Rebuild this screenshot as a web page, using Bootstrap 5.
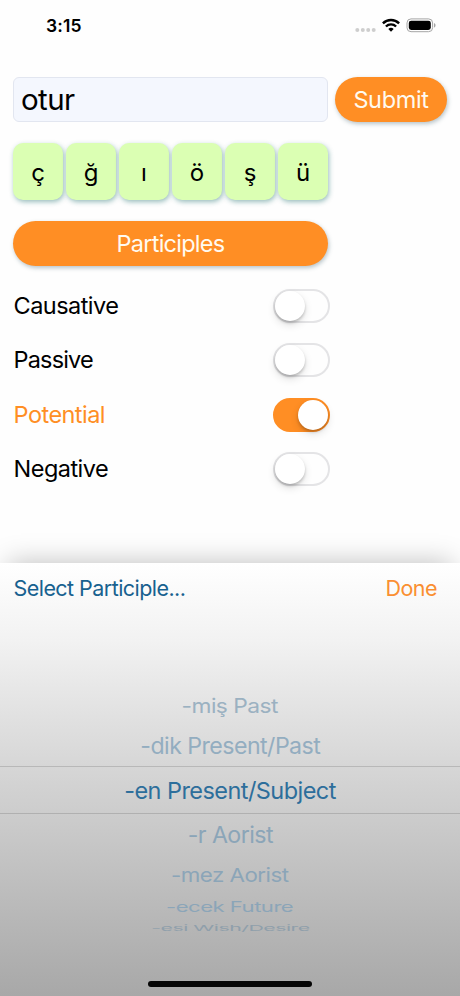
<!DOCTYPE html>
<html lang="en">
<head>
<meta charset="utf-8">
<meta name="viewport" content="width=device-width, initial-scale=1">
<title>Verb participles</title>
<link href="https://cdn.jsdelivr.net/npm/bootstrap@5.3.0/dist/css/bootstrap.min.css" rel="stylesheet">
<style>
:root{--orange:#ff8e24;--blue:#17618f}
body{font-family:Inter,"Liberation Sans",sans-serif;color:#000;background:#fefefe;font-size:23.5px;line-height:1.2;letter-spacing:-.55px;overflow:hidden}
.phone{width:460px;height:996px}
.status{height:77px;padding:15px 24px 0 46px}
.clock{font-size:17.5px;font-weight:600;letter-spacing:.1px;line-height:22px}
.content{height:485.5px;padding:0 13px}
.word{width:315px;height:45px;border:1px solid #e2e6f0;border-radius:6px;background:#f4f7fe;font-size:29.5px;letter-spacing:-.6px;padding:0 7px 2px;color:#000;line-height:1}
.pill{height:45px;border:0;border-radius:23px;background:var(--orange);color:#fffaf0;font-size:23.5px;line-height:1;letter-spacing:-.35px;padding:0;box-shadow:1px 2px 4px rgba(50,85,100,.34)}
.pill:hover{background:var(--orange);color:#fff}
.submit{width:112px}
.left-col{width:315px}
.keys{margin-top:21px;gap:3px}
.key{width:50px;height:57px;border:0;border-radius:10px;background:#dbffb3;color:#000;font-size:24px;line-height:1;padding:2px 0 0;box-shadow:1px 2px 5px rgba(30,110,110,.45)}
.participles{margin-top:21px;letter-spacing:-.75px}
.options{margin-top:12.8px}
.option{height:54.4px;width:317px}
.option>span:first-child{padding-left:.6px}
.option:nth-child(2)>span:first-child{letter-spacing:-.85px}
.option.on{color:var(--orange)}
.form-switch .toggle{width:57px;height:34px;border-radius:17px;border:2px solid #e4e4e6;background:#fefefe;position:relative;display:block}
.toggle::after{content:"";position:absolute;left:0;top:0;width:30px;height:30px;border-radius:50%;background:#fff;box-shadow:0 2px 3px rgba(0,0,0,.2),0 4px 9px rgba(0,0,0,.12)}
.on .toggle{background:var(--orange)!important;border-color:var(--orange)!important}
.on .toggle::after{left:23px}
.sheet{height:433.5px;background:linear-gradient(#fff 0,#f2f2f2 18%,#e6e6e6 30%,#cecece 56%,#b9b9b9 80%,#a8a8a8 100%);box-shadow:0 -8px 26px -8px rgba(0,0,0,.26);position:relative}
.sheet-head{height:52px;padding:0 23px 0 13.5px;font-size:21.5px;color:var(--blue)}
.sheet-head .done{color:#fa8f31}
.wheel{padding-top:80px;color:#8ba5b8}
.slot{display:flex;align-items:center;justify-content:center;white-space:nowrap}
.slot span{display:block}
.s1{height:24px;color:#9bb1c1}.s1 span{transform:translateY(.5px) scale(.97,.86)}
.s2{height:47.5px;color:#93adc0}.s2 span{transform:translateY(4.5px) scale(.985,.96)}
.s3{height:48px;border-top:1.5px solid #b8b8b8;border-bottom:1.5px solid #b0b0b0;color:#2d6e9b}
.s3 span{transform:translateY(1px)}
.s4{height:43px}.s4 span{transform:translateY(.5px) scale(.985,.95)}
.s5{height:37px}.s5 span{transform:scale(.95,.82)}
.s6{height:25px}.s6 span{transform:translateY(1px) scale(.94,.6)}
.s7{height:18px;color:#8f9fab}.s7 span{transform:scale(.905,.34)}
.home{width:164px;height:6px;border-radius:3px;background:#050505;position:absolute;left:148px;bottom:9px}
</style>
<script src="https://cdn.jsdelivr.net/npm/bootstrap@5.3.0/dist/js/bootstrap.bundle.min.js"></script>
</head>
<body>
<div class="phone d-flex flex-column">
  <header class="status d-flex justify-content-between align-items-start">
    <span class="clock">3:15</span>
    <svg width="82" height="22" viewBox="354 15 82 22">
      <g fill="#cecece"><circle cx="357.3" cy="30" r="2"/><circle cx="362.8" cy="30" r="2"/><circle cx="368.2" cy="30" r="2"/><circle cx="373.7" cy="30" r="2"/></g>
      <path d="M391 31.8l-2.7-2.7a3.9 3.9 0 0 1 5.4 0z"/>
      <g fill="none" stroke="#000" stroke-width="2.4"><path d="M382.9 23.3a11.6 11.6 0 0 1 16.2 0"/><path d="M385.9 26.5a7.3 7.3 0 0 1 10.2 0"/></g>
      <rect x="407" y="18.9" width="25.6" height="12.8" rx="4" fill="none" stroke="#a5a5a5"/>
      <rect x="408.8" y="20.7" width="22" height="9.2" rx="2.4"/>
      <path d="M434 23v4.6c2-.8 2-3.8 0-4.6z" fill="#a5a5a5"/>
    </svg>
  </header>
  <main class="content">
    <div class="d-flex justify-content-between">
      <input class="word" type="text" value="otur" aria-label="Verb">
      <button class="btn pill submit">Submit</button>
    </div>
    <div class="left-col">
      <div class="keys d-flex">
        <button class="btn key">ç</button><button class="btn key">ğ</button><button class="btn key">ı</button><button class="btn key">ö</button><button class="btn key">ş</button><button class="btn key">ü</button>
      </div>
      <button class="btn pill participles w-100">Participles</button>
      <div class="options">
        <div class="option form-switch p-0 d-flex align-items-center justify-content-between"><span>Causative</span><span class="toggle" role="switch" aria-checked="false"></span></div>
        <div class="option form-switch p-0 d-flex align-items-center justify-content-between"><span>Passive</span><span class="toggle" role="switch" aria-checked="false"></span></div>
        <div class="option on form-switch p-0 d-flex align-items-center justify-content-between"><span>Potential</span><span class="toggle" role="switch" aria-checked="true"></span></div>
        <div class="option form-switch p-0 d-flex align-items-center justify-content-between"><span>Negative</span><span class="toggle" role="switch" aria-checked="false"></span></div>
      </div>
    </div>
  </main>
  <section class="sheet">
    <div class="sheet-head d-flex align-items-center justify-content-between"><span>Select Participle...</span><span class="done">Done</span></div>
    <div class="wheel">
      <div class="slot s1"><span>-miş Past</span></div>
      <div class="slot s2"><span>-dik Present/Past</span></div>
      <div class="slot s3"><span>-en Present/Subject</span></div>
      <div class="slot s4"><span>-r Aorist</span></div>
      <div class="slot s5"><span>-mez Aorist</span></div>
      <div class="slot s6"><span>-ecek Future</span></div>
      <div class="slot s7"><span>-esi Wish/Desire</span></div>
    </div>
    <div class="home"></div>
  </section>
</div>
</body>
</html>
